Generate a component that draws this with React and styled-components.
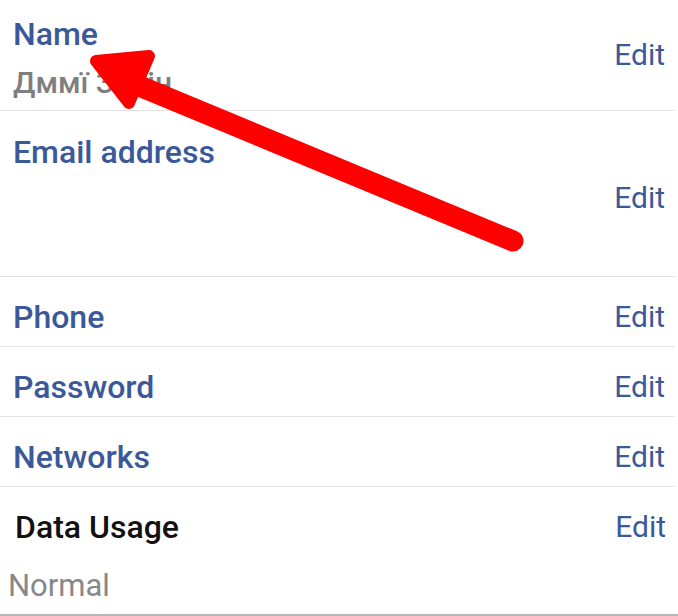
import React from "react";
import styled, { createGlobalStyle } from "styled-components";

const GlobalStyle = createGlobalStyle`
  html, body {
    margin: 0;
    padding: 0;
    background: #ffffff;
  }
  body {
    font-family: Roboto, "Noto Sans", "Liberation Sans", sans-serif;
    -webkit-font-smoothing: antialiased;
  }
  * { box-sizing: border-box; }
`;

const Page = styled.div`
  position: relative;
  width: 678px;
  height: 616px;
  overflow: hidden;
  background: #fff;
`;

const List = styled.div`
  display: flex;
  flex-direction: column;
  width: 675px;
`;

const Row = styled.div`
  display: flex;
  justify-content: space-between;
  align-items: center;
  height: ${(p) => p.$height}px;
  padding: ${(p) => p.$padTop || 0}px 10px 0 13px;
  border-bottom: 1px solid #e3e3e3;
`;

const Info = styled.div`
  display: flex;
  flex-direction: column;
  align-self: ${(p) => (p.$top ? "flex-start" : "center")};
  padding-top: ${(p) => p.$offset || 0}px;
`;

const Label = styled.div`
  color: #3b5998;
  font-size: 32px;
  font-weight: 500;
  line-height: 38px;
  white-space: nowrap;
`;

const SubValue = styled.div`
  color: #7f7f7f;
  font-size: 30px;
  font-weight: 500;
  line-height: 34px;
  margin-top: 13px;
  white-space: nowrap;
`;

const EditLink = styled.a`
  color: #3b5998;
  font-size: 30px;
  font-weight: 400;
  line-height: 36px;
  text-decoration: none;
  cursor: pointer;
`;

const UsageBlock = styled.div`
  display: flex;
  flex-direction: column;
  height: 129px;
  padding-top: 21px;
  border-bottom: 2px solid #b5b5b5;
  width: 678px;
`;

const UsageHeader = styled.div`
  display: flex;
  justify-content: space-between;
  align-items: center;
  padding: 0 9px 0 15px;
  width: 675px;
`;

const UsageTitle = styled.div`
  color: #111;
  font-size: 32px;
  font-weight: 500;
  line-height: 38px;
`;

const UsageValue = styled.div`
  color: #888888;
  font-size: 31px;
  font-weight: 400;
  line-height: 36px;
  margin-top: 22px;
  padding-left: 8px;
`;

const Annotation = styled.svg`
  position: absolute;
  left: 0;
  top: 0;
  pointer-events: none;
`;

const simpleRows = ["Phone", "Password", "Networks"];

export default function App() {
  return (
    <>
      <GlobalStyle />
      <Page>
        <List>
          <Row $height={111}>
            <Info $top $offset={15}>
              <Label>Name</Label>
              <SubValue>Дммї Зелін</SubValue>
            </Info>
            <EditLink>Edit</EditLink>
          </Row>
          <Row $height={166} $padTop={8}>
            <Info $top $offset={14}>
              <Label>Email address</Label>
            </Info>
            <EditLink>Edit</EditLink>
          </Row>
          {simpleRows.map((r) => (
            <Row key={r} $height={70} $padTop={11}>
              <Info>
                <Label>{r}</Label>
              </Info>
              <EditLink>Edit</EditLink>
            </Row>
          ))}
          <UsageBlock>
            <UsageHeader>
              <UsageTitle>Data Usage</UsageTitle>
              <EditLink>Edit</EditLink>
            </UsageHeader>
            <UsageValue>Normal</UsageValue>
          </UsageBlock>
        </List>
        <Annotation width="678" height="616" viewBox="0 0 678 616">
          <line
            x1="120"
            y1="78"
            x2="513"
            y2="241"
            stroke="#ff0000"
            strokeWidth="21"
            strokeLinecap="round"
          />
          <polygon
            points="96,61 149,56 129,103"
            fill="#ff0000"
            stroke="#ff0000"
            strokeWidth="12"
            strokeLinejoin="round"
          />
        </Annotation>
      </Page>
    </>
  );
}
